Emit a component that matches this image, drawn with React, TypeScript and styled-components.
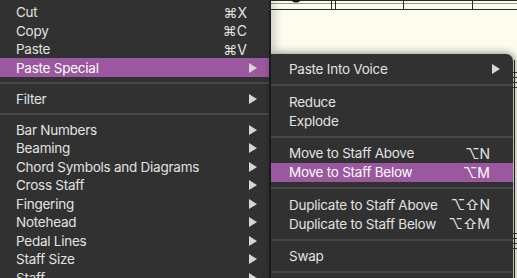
import React from "react";
import styled, { createGlobalStyle } from "styled-components";

const Global = createGlobalStyle`
  html, body { margin: 0; padding: 0; background: #fcfcef; }
  body { font-family: Inter, "Liberation Sans", "DejaVu Sans", sans-serif; -webkit-font-smoothing: antialiased; }
`;

const Stage = styled.div`
  position: relative;
  width: 517px;
  height: 278px;
  overflow: hidden;
  background: #fcfcef;
`;

const Score = styled.svg`
  position: absolute;
  left: 0;
  top: 0;
`;

const MenuPanel = styled.div`
  position: absolute;
  background: #313131;
  color: #e4e4e4;
  font-size: 13.5px;
  letter-spacing: -0.25px;
  display: flex;
  flex-direction: column;
`;

const MainMenu = styled(MenuPanel)`
  left: 0;
  top: 0;
  width: 269px;
  height: 300px;
  padding-top: 2.75px;
  border-right: 2px solid #1f1f1f;
  box-shadow: 3px 0 10px rgba(0, 0, 0, 0.22);
`;

const SubMenu = styled(MenuPanel)`
  left: 271px;
  top: 54px;
  width: 242px;
  height: 260px;
  padding-top: 5.5px;
  border-top-right-radius: 7px;
  box-shadow: 0 -2px 10px rgba(0, 0, 0, 0.22), 2px 0 6px rgba(0, 0, 0, 0.25);
`;

const Row = styled.div<{ $active?: boolean; $h: number; $pl: number; $pr: number }>`
  display: flex;
  align-items: center;
  flex: none;
  height: ${(p) => p.$h}px;
  padding: 0 ${(p) => p.$pr}px 0 ${(p) => p.$pl}px;
  background: ${(p) => (p.$active ? "#9b579f" : "transparent")};
  color: ${(p) => (p.$active ? "#ffffff" : "#e2e2e2")};
  white-space: nowrap;
`;

const Label = styled.span`
  flex: 1;
`;

const Shortcut = styled.span`
  margin-right: 2px;
  font-size: 14px;
  letter-spacing: 0;
  font-family: Inter, "DejaVu Sans", sans-serif;
`;

const Arrow = styled.span`
  width: 0;
  height: 0;
  border-top: 5px solid transparent;
  border-bottom: 5px solid transparent;
  border-left: 8px solid #d6d6d6;
`;

const ArrowSpace = styled.span`
  width: 8px;
`;

const Separator = styled.div<{ $h: number }>`
  flex: none;
  height: ${(p) => p.$h}px;
  display: flex;
  align-items: center;
  &::after {
    content: "";
    display: block;
    width: 100%;
    height: 2px;
    background: #474747;
  }
`;

type Item = { label?: string; shortcut?: string; sub?: boolean; active?: boolean; sep?: boolean };

const mainItems: Item[] = [
  { label: "Cut", shortcut: "⌘X" },
  { label: "Copy", shortcut: "⌘C" },
  { label: "Paste", shortcut: "⌘V" },
  { label: "Paste Special", sub: true, active: true },
  { sep: true },
  { label: "Filter", sub: true },
  { sep: true },
  { label: "Bar Numbers", sub: true },
  { label: "Beaming", sub: true },
  { label: "Chord Symbols and Diagrams", sub: true },
  { label: "Cross Staff", sub: true },
  { label: "Fingering", sub: true },
  { label: "Notehead", sub: true },
  { label: "Pedal Lines", sub: true },
  { label: "Staff Size", sub: true },
  { label: "Staff", sub: true },
];

const subItems: Item[] = [
  { label: "Paste Into Voice", sub: true },
  { sep: true },
  { label: "Reduce" },
  { label: "Explode" },
  { sep: true },
  { label: "Move to Staff Above", shortcut: "⌥N" },
  { label: "Move to Staff Below", shortcut: "⌥M", active: true },
  { sep: true },
  { label: "Duplicate to Staff Above", shortcut: "⌥⇧N" },
  { label: "Duplicate to Staff Below", shortcut: "⌥⇧M" },
  { sep: true },
  { label: "Swap" },
  { sep: true },
];

function renderItems(items: Item[], h: number, sepH: number, pl: number, pr: number) {
  return items.map((it, i) =>
    it.sep ? (
      <Separator key={i} $h={sepH} />
    ) : (
      <Row key={i} $active={it.active} $h={h} $pl={pl} $pr={pr}>
        <Label>{it.label}</Label>
        {it.shortcut && <Shortcut>{it.shortcut}</Shortcut>}
        {it.sub ? <Arrow /> : <ArrowSpace />}
      </Row>
    )
  );
}

export default function App() {
  return (
    <Stage>
      <Global />
      <Score width={517} height={278}>
        <g stroke="#9a9a90" strokeWidth={1}>
          <line x1={271} y1={3.5} x2={517} y2={3.5} />
        </g>
        <g stroke="#2a2a2a" strokeWidth={1}>
          <line x1={271} y1={9.5} x2={517} y2={9.5} />
          <line x1={271} y1={0.5} x2={517} y2={0.5} />
          <line x1={331.5} y1={0} x2={331.5} y2={10} />
          <line x1={335.5} y1={0} x2={335.5} y2={10} />
          <line x1={403.5} y1={0} x2={403.5} y2={10} />
          <line x1={472.5} y1={0} x2={472.5} y2={10} />
          <line x1={514.5} y1={60} x2={514.5} y2={278} />
        </g>
        <ellipse cx={296} cy={0} rx={4} ry={2.5} fill="#111" />
        <g stroke="#3a3a3a" strokeWidth={1}>
          {[72, 77, 82, 87, 233, 238, 243, 248].map((y) => (
            <line key={y} x1={513} y1={y + 0.5} x2={517} y2={y + 0.5} />
          ))}
        </g>
      </Score>
      <MainMenu>{renderItems(mainItems, 18.5, 12.5, 16, 12)}</MainMenu>
      <SubMenu>{renderItems(subItems, 19, 13.5, 18, 13)}</SubMenu>
    </Stage>
  );
}
